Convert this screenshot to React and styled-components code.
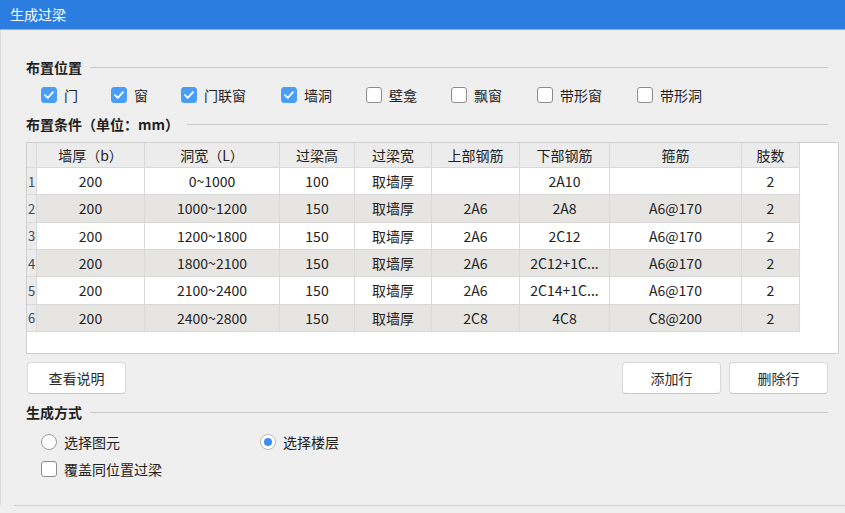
import React from 'react';
import styled, { createGlobalStyle } from 'styled-components';

const GlobalStyle = createGlobalStyle`
	html, body {
		margin: 0;
		padding: 0;
		background: #efefef;
	}
	body {
		font-family: 'Noto Sans CJK SC', 'Microsoft YaHei', 'Noto Sans', sans-serif;
		font-size: 14px;
		color: #222;
	}
	* {
		box-sizing: border-box;
	}
`;

// widths keep each option on its own column like the dialog does
const positions = [
	{ label: '门', checked: true, width: 70 },
	{ label: '窗', checked: true, width: 70 },
	{ label: '门联窗', checked: true, width: 100 },
	{ label: '墙洞', checked: true, width: 85 },
	{ label: '壁龛', checked: false, width: 85 },
	{ label: '飘窗', checked: false, width: 86 },
	{ label: '带形窗', checked: false, width: 100 },
	{ label: '带形洞', checked: false },
];

const columns = ['墙厚（b）', '洞宽（L）', '过梁高', '过梁宽', '上部钢筋', '下部钢筋', '箍筋', '肢数'];
const colWidths = '10px 108px 135px 75px 77px 88px 90px 132px 58px';

const rows = [
	['200', '0~1000', '100', '取墙厚', '', '2A10', '', '2'],
	['200', '1000~1200', '150', '取墙厚', '2A6', '2A8', 'A6@170', '2'],
	['200', '1200~1800', '150', '取墙厚', '2A6', '2C12', 'A6@170', '2'],
	['200', '1800~2100', '150', '取墙厚', '2A6', '2C12+1C...', 'A6@170', '2'],
	['200', '2100~2400', '150', '取墙厚', '2A6', '2C14+1C...', 'A6@170', '2'],
	['200', '2400~2800', '150', '取墙厚', '2C8', '4C8', 'C8@200', '2'],
];

function CheckBox({ checked, label, width }) {
	return (
		<Option $width={width}>
			<Box $checked={checked}>
				{checked && (
					<svg width="10" height="8" viewBox="0 0 10 8">
						<path d="M1 4.2 L3.8 6.8 L9 1.2" fill="none" stroke="#fff" strokeWidth="1.8" strokeLinecap="round" strokeLinejoin="round" />
					</svg>
				)}
			</Box>
			{label}
		</Option>
	);
}

function Radio({ checked, label, width }) {
	return (
		<Option $width={width}>
			<Circle $checked={checked} />
			{label}
		</Option>
	);
}

function Section({ title }) {
	return (
		<SectionHead>
			<span>{title}</span>
			<Rule />
		</SectionHead>
	);
}

export default function App() {
	return (
		<Window>
			<GlobalStyle />
			<TitleBar>生成过梁</TitleBar>
			<Body>
				<Section title="布置位置" />
				<CheckRow>
					{positions.map((p) => (
						<CheckBox key={p.label} checked={p.checked} label={p.label} width={p.width} />
					))}
				</CheckRow>
				<Section title="布置条件（单位：mm）" />
				<TableFrame>
					<Row $header>
						<RowNo />
						{columns.map((c) => (
							<Cell key={c}>{c}</Cell>
						))}
					</Row>
					{rows.map((r, i) => (
						<Row key={i} $alt={i % 2 === 1}>
							<RowNo>{i + 1}</RowNo>
							{r.map((v, j) => (
								<Cell key={j}>{v}</Cell>
							))}
						</Row>
					))}
				</TableFrame>
				<ButtonRow>
					<Button>查看说明</Button>
					<RightButtons>
						<Button>添加行</Button>
						<Button>删除行</Button>
					</RightButtons>
				</ButtonRow>
				<Section title="生成方式" />
				<OptionRow $top={10}>
					<Radio label="选择图元" width={219} />
					<Radio label="选择楼层" checked />
				</OptionRow>
				<OptionRow $top={7}>
					<CheckBox label="覆盖同位置过梁" />
				</OptionRow>
			</Body>
			<Footer />
		</Window>
	);
}

const Window = styled.div`
	width: 845px;
	height: 513px;
	display: flex;
	flex-direction: column;
	overflow: hidden;
	background: #efefef;
`;

const TitleBar = styled.div`
	height: 30px;
	padding-left: 10px;
	background: #2b7de0;
	border-bottom: 1px solid #7fb3ee;
	color: #fff;
	font-size: 14px;
	line-height: 28px;
`;

const Body = styled.div`
	flex: 1;
	padding: 27px 17px 0 25px;
	border-left: 1px solid #dcdcdc;
`;

const SectionHead = styled.div`
	display: flex;
	align-items: center;
	gap: 8px;
	height: 20px;
	line-height: 20px;
	font-weight: bold;
	color: #1f1f1f;
`;

const Rule = styled.div`
	flex: 1;
	height: 1px;
	background: #c9c9c9;
`;

const CheckRow = styled.div`
	display: flex;
	margin: 8px 0 9px;
	padding-left: 15px;
	height: 20px;
`;

const Option = styled.label`
	display: flex;
	align-items: center;
	gap: 7px;
	height: 20px;
	line-height: 20px;
	color: #222;
	flex: none;
	width: ${(p) => (p.$width ? `${p.$width}px` : 'auto')};
`;

const Box = styled.span`
	width: 16px;
	height: 16px;
	border-radius: 3px;
	display: flex;
	align-items: center;
	justify-content: center;
	background: ${(p) => (p.$checked ? '#4a9ef5' : '#fff')};
	border: 1px solid ${(p) => (p.$checked ? '#4a9ef5' : '#8c8c8c')};
`;

const Circle = styled.span`
	width: 16px;
	height: 16px;
	border-radius: 50%;
	background: #fff;
	border: 1px solid ${(p) => (p.$checked ? '#b9b9b9' : '#999')};
	display: flex;
	align-items: center;
	justify-content: center;
	&::after {
		content: '';
		display: ${(p) => (p.$checked ? 'block' : 'none')};
		width: 8px;
		height: 8px;
		border-radius: 50%;
		background: #3c8ef2;
	}
`;

const TableFrame = styled.div`
	margin: 8px -11px 0 0;
	height: 212px;
	background: #fff;
	border: 1px solid #cfcfcf;
`;

const Row = styled.div`
	display: grid;
	grid-template-columns: ${colWidths};
	height: ${(p) => (p.$header ? '25px' : '27.33px')};
	background: ${(p) => (p.$header ? '#ececec' : p.$alt ? '#e7e5e2' : '#fff')};
	width: 773px;
`;

const Cell = styled.div`
	display: flex;
	align-items: center;
	justify-content: center;
	border-right: 1px solid #d9d9d9;
	border-bottom: 1px solid #d9d9d9;
	white-space: nowrap;
	overflow: hidden;
	color: #222;
`;

const RowNo = styled(Cell)`
	justify-content: flex-start;
	padding-left: 1px;
	background: #ebebeb;
	color: #3d4a66;
	font-size: 13px;
`;

const ButtonRow = styled.div`
	display: flex;
	justify-content: space-between;
	margin: 8px 0 8px 1px;
`;

const RightButtons = styled.div`
	display: flex;
	gap: 8px;
`;

const Button = styled.button`
	width: 99px;
	height: 32px;
	font: inherit;
	color: #2a2a2a;
	background: #fff;
	border: 1px solid #d8d8d8;
	border-bottom-color: #c8c8c8;
	border-radius: 4px;
	padding: 0;
`;

const OptionRow = styled.div`
	display: flex;
	margin-top: ${(p) => p.$top}px;
	padding-left: 15px;
`;

const Footer = styled.div`
	height: 8px;
	margin-left: 14px;
	border-top: 1px solid #d0d0d0;
`;
